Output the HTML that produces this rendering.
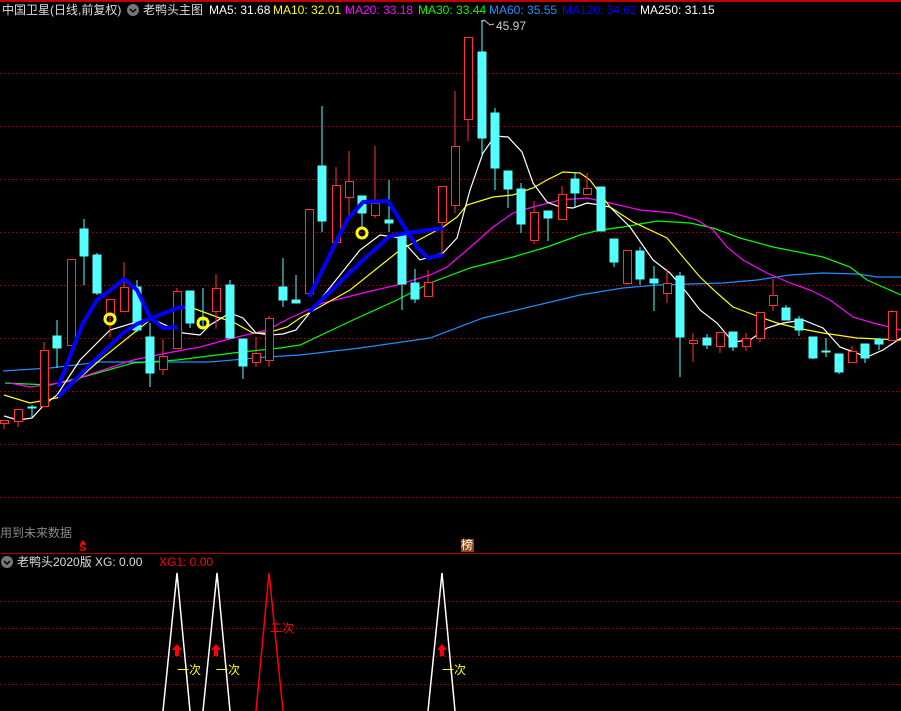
<!DOCTYPE html>
<html><head><meta charset="utf-8"><style>
html,body{margin:0;padding:0;background:#000;width:901px;height:711px;overflow:hidden}
.t{position:absolute;font:12px "Liberation Sans","Noto Sans CJK SC",sans-serif;white-space:nowrap;line-height:14px}
</style></head><body>
<svg width="901" height="711" style="position:absolute;left:0;top:0" xmlns="http://www.w3.org/2000/svg">
<rect x="0" y="0" width="901" height="2" fill="#c00000"/>
<g stroke="#b00000" stroke-dasharray="1 3" stroke-width="1">
<line x1="0" x2="901" y1="73.5" y2="73.5"/><line x1="0" x2="901" y1="126.5" y2="126.5"/><line x1="0" x2="901" y1="179.5" y2="179.5"/><line x1="0" x2="901" y1="232.5" y2="232.5"/><line x1="0" x2="901" y1="285.5" y2="285.5"/><line x1="0" x2="901" y1="338.5" y2="338.5"/><line x1="0" x2="901" y1="391.5" y2="391.5"/><line x1="0" x2="901" y1="444.5" y2="444.5"/><line x1="0" x2="901" y1="497.5" y2="497.5"/>
<line x1="0" x2="901" y1="601.5" y2="601.5"/><line x1="0" x2="901" y1="628.5" y2="628.5"/><line x1="0" x2="901" y1="656.5" y2="656.5"/><line x1="0" x2="901" y1="684.5" y2="684.5"/>
</g>
<rect x="0" y="553" width="901" height="1" fill="#b00000"/>
<!-- MA lines -->
<g fill="none" stroke-width="1.2">
<polyline stroke="#1e90ff" points="3,371 50,368 100,362 167,362 210,362 267,357 300,355 360,348 430,338 483,318 580,295 623,288 657,285 690,284 723,283 757,280 790,275 823,273 857,274 877,277 901,277"/>
<polyline stroke="#00ff00" points="5,383 50,385 83,377 133,363 177,360 233,353 280,348 300,345 353,320 397,300 430,283 470,268 513,257 547,247 580,235 600,230 623,227 657,221 690,223 713,228 740,238 773,247 823,257 850,267 867,280 901,295"/>
<polyline stroke="#ff00ff" points="10,383 30,387 67,382 133,360 167,353 200,347 233,338 267,330 290,318 323,303 363,293 397,285 430,275 447,267 467,250 493,227 513,213 533,207 560,200 587,198 610,203 640,210 673,213 697,220 713,230 727,247 743,260 767,273 790,283 810,290 830,300 853,317 873,323 901,330"/>
<polyline stroke="#ffff00" points="4,395 30,403 57,398 100,360 150,320 180,308 190,307 217,317 233,322 253,333 267,333 287,327 300,318 350,290 400,250 443,227 457,217 467,205 493,197 513,195 533,188 547,180 563,172 580,173 590,180 610,207 633,222 667,238 683,257 700,277 717,293 733,307 757,316 777,323 797,328 823,333 857,338 901,340"/>
<polyline stroke="#ffffff" points="4,416 18,420 32,418 44,405 57,395 80,360 110,330 150,318 183,333 200,335 210,325 230,313 243,318 256,333 270,335 283,334 296,330 320,300 340,275 360,250 380,235 400,238 420,260 443,253 457,238 470,190 483,153 495,136 508,137 522,152 533,183 547,202 560,207 573,208 587,203 600,205 610,207 630,227 653,260 670,273 687,293 700,310 717,323 733,342 750,340 767,328 783,323 803,320 823,328 840,347 867,357 883,350 901,338"/>
</g>
<!-- cyan candles -->
<g stroke="#54ffff" fill="#54ffff">
<line x1="32" x2="32" y1="405" y2="417"/><rect x="28" y="407" width="8" height="1"/>
<line x1="57" x2="57" y1="320" y2="368"/><rect x="53" y="336" width="8" height="12"/>
<line x1="84" x2="84" y1="219" y2="285"/><rect x="80" y="229" width="8" height="27"/>
<line x1="97" x2="97" y1="253" y2="295"/><rect x="93" y="255" width="8" height="38"/>
<line x1="137" x2="137" y1="280" y2="332"/><rect x="133" y="287" width="8" height="43"/>
<line x1="150" x2="150" y1="323" y2="387"/><rect x="146" y="337" width="8" height="36"/>
<line x1="190" x2="190" y1="291" y2="328"/><rect x="186" y="291" width="8" height="32"/>
<line x1="203" x2="203" y1="288" y2="328"/><rect x="199" y="318" width="8" height="2"/>
<line x1="230" x2="230" y1="280" y2="338"/><rect x="226" y="285" width="8" height="53"/>
<line x1="243" x2="243" y1="339" y2="379"/><rect x="239" y="339" width="8" height="27"/>
<line x1="283" x2="283" y1="258" y2="307"/><rect x="279" y="287" width="8" height="13"/>
<line x1="296" x2="296" y1="275" y2="303"/><rect x="292" y="300" width="8" height="3"/>
<line x1="322" x2="322" y1="106" y2="232"/><rect x="318" y="166" width="8" height="55"/>
<line x1="362" x2="362" y1="196" y2="228"/><rect x="358" y="196" width="8" height="17"/>
<line x1="389" x2="389" y1="180" y2="232"/><rect x="385" y="220" width="8" height="3"/>
<line x1="402" x2="402" y1="235" y2="310"/><rect x="398" y="235" width="8" height="49"/>
<line x1="415" x2="415" y1="269" y2="303"/><rect x="411" y="283" width="8" height="16"/>
<line x1="482" x2="482" y1="20" y2="157"/><rect x="478" y="52" width="8" height="86"/>
<line x1="495" x2="495" y1="108" y2="190"/><rect x="491" y="113" width="8" height="55"/>
<line x1="508" x2="508" y1="171" y2="208"/><rect x="504" y="171" width="8" height="18"/>
<line x1="521" x2="521" y1="183" y2="233"/><rect x="517" y="189" width="8" height="35"/>
<line x1="548" x2="548" y1="211" y2="241"/><rect x="544" y="211" width="8" height="7"/>
<line x1="575" x2="575" y1="172" y2="207"/><rect x="571" y="179" width="8" height="14"/>
<line x1="601" x2="601" y1="187" y2="231"/><rect x="597" y="187" width="8" height="44"/>
<line x1="614" x2="614" y1="239" y2="267"/><rect x="610" y="239" width="8" height="23"/>
<line x1="640" x2="640" y1="247" y2="285"/><rect x="636" y="251" width="8" height="28"/>
<line x1="654" x2="654" y1="266" y2="311"/><rect x="650" y="279" width="8" height="4"/>
<line x1="680" x2="680" y1="272" y2="377"/><rect x="676" y="276" width="8" height="61"/>
<line x1="707" x2="707" y1="334" y2="349"/><rect x="703" y="338" width="8" height="7"/>
<line x1="733" x2="733" y1="332" y2="351"/><rect x="729" y="332" width="8" height="15"/>
<line x1="786" x2="786" y1="305" y2="320"/><rect x="782" y="308" width="8" height="12"/>
<line x1="799" x2="799" y1="316" y2="336"/><rect x="795" y="319" width="8" height="11"/>
<line x1="813" x2="813" y1="337" y2="359"/><rect x="809" y="337" width="8" height="21"/>
<line x1="826" x2="826" y1="338" y2="357"/><rect x="822" y="351" width="8" height="1"/>
<line x1="839" x2="839" y1="354" y2="374"/><rect x="835" y="354" width="8" height="18"/>
<line x1="865" x2="865" y1="344" y2="363"/><rect x="861" y="344" width="8" height="14"/>
<line x1="879" x2="879" y1="338" y2="350"/><rect x="875" y="339" width="8" height="5"/>
</g>
<!-- red candles -->
<g stroke="#ff3333" fill="#000">
<line x1="4" x2="4" y1="420" y2="429"/><line x1="18" x2="18" y1="409" y2="427"/><line x1="44" x2="44" y1="342" y2="406"/><line x1="71" x2="71" y1="259" y2="345"/><line x1="110" x2="110" y1="299" y2="337"/><line x1="124" x2="124" y1="262" y2="311"/><line x1="163" x2="163" y1="339" y2="375"/><line x1="177" x2="177" y1="288" y2="348"/><line x1="216" x2="216" y1="274" y2="329"/><line x1="256" x2="256" y1="337" y2="367"/><line x1="269" x2="269" y1="316" y2="367"/><line x1="309" x2="309" y1="209" y2="293"/><line x1="336" x2="336" y1="167" y2="242"/><line x1="349" x2="349" y1="151" y2="215"/><line x1="375" x2="375" y1="146" y2="218"/><line x1="428" x2="428" y1="270" y2="297"/><line x1="442" x2="442" y1="186" y2="253"/><line x1="455" x2="455" y1="91" y2="213"/><line x1="468" x2="468" y1="37" y2="141"/><line x1="534" x2="534" y1="201" y2="244"/><line x1="562" x2="562" y1="186" y2="219"/><line x1="587" x2="587" y1="173" y2="194"/><line x1="627" x2="627" y1="250" y2="285"/><line x1="667" x2="667" y1="269" y2="303"/><line x1="693" x2="693" y1="333" y2="362"/><line x1="720" x2="720" y1="332" y2="353"/><line x1="746" x2="746" y1="333" y2="351"/><line x1="760" x2="760" y1="312" y2="342"/><line x1="773" x2="773" y1="279" y2="311"/><line x1="852" x2="852" y1="346" y2="362"/><line x1="892" x2="892" y1="310" y2="340"/>
<rect x="0.5" y="420.5" width="8" height="3"/><rect x="14.5" y="409.5" width="8" height="12"/><rect x="40.5" y="350.5" width="8" height="56"/><rect x="67.5" y="259.5" width="8" height="86"/><rect x="106.5" y="299.5" width="8" height="16"/><rect x="120.5" y="287.5" width="8" height="24"/><rect x="159.5" y="356.5" width="8" height="13"/><rect x="173.5" y="291.5" width="8" height="57"/><rect x="212.5" y="288.5" width="8" height="23"/><rect x="252.5" y="353.5" width="8" height="9"/><rect x="265.5" y="318.5" width="8" height="42"/><rect x="305.5" y="209.5" width="8" height="84"/><rect x="332.5" y="185.5" width="8" height="57"/><rect x="345.5" y="181.5" width="8" height="16"/><rect x="371.5" y="203.5" width="8" height="12"/><rect x="424.5" y="282.5" width="8" height="14"/><rect x="438.5" y="186.5" width="8" height="36"/><rect x="451.5" y="146.5" width="8" height="59"/><rect x="464.5" y="37.5" width="8" height="82"/><rect x="530.5" y="212.5" width="8" height="28"/><rect x="558.5" y="194.5" width="8" height="25"/><rect x="583.5" y="188.5" width="8" height="6"/><rect x="623.5" y="250.5" width="8" height="33"/><rect x="663.5" y="283.5" width="8" height="10"/><rect x="689.5" y="340.5" width="8" height="3"/><rect x="716.5" y="332.5" width="8" height="14"/><rect x="742.5" y="338.5" width="8" height="8"/><rect x="756.5" y="312.5" width="8" height="26"/><rect x="769.5" y="295.5" width="8" height="10"/><rect x="848.5" y="351.5" width="8" height="11"/><rect x="888.5" y="311.5" width="8" height="29"/>
</g>
<!-- thick blue -->
<g fill="none" stroke="#0000ff" stroke-width="4" stroke-linejoin="round">
<polyline points="58,387 83,323 97,300 113,288 124,279 137,290 150,317 163,328 177,327"/>
<polyline points="58,397 90,365 123,333 137,324 177,308 185,307"/>
<polyline points="309,297 347,220 363,202 388,201 417,247 428,258 443,255"/>
<polyline points="309,312 363,260 390,236 407,233 443,228"/>
</g>
<g fill="none" stroke="#ffff00" stroke-width="3">
<circle cx="110" cy="319" r="5"/><circle cx="203" cy="323" r="5"/><circle cx="362" cy="233" r="5"/>
</g>
<polyline points="482,22 484,20 490,25 494,24" fill="none" stroke="#ccc"/>
<!-- lower panel -->
<g fill="none" stroke="#fff" stroke-width="1.5">
<polyline points="163,711 177,573 190,711"/><polyline points="203,711 217,573 230,711"/><polyline points="428,711 442,573 455,711"/>
</g>
<polyline points="256,711 269,573 283,711" fill="none" stroke="#ff0000" stroke-width="1.5"/>
<g fill="#ff0000">
<polygon points="177,644 172,650 175,650 175,656 179,656 179,650 182,650"/>
<polygon points="216,644 211,650 214,650 214,656 218,656 218,650 221,650"/>
<polygon points="442,644 437,650 440,650 440,656 444,656 444,650 447,650"/>
<polygon points="83,540 80,544 86,544"/>
</g>
<rect x="461" y="539" width="13" height="13" fill="#8b4513"/>
<circle cx="133" cy="10" r="6" fill="#777"/><polyline points="130,9 133,12 136,9" fill="none" stroke="#000" stroke-width="1.5"/>
<circle cx="7" cy="562" r="6" fill="#777"/><polyline points="4,561 7,564 10,561" fill="none" stroke="#000" stroke-width="1.5"/>
</svg>
<div class="t" style="left:2px;top:3px;color:#ddd">中国卫星(日线,前复权)</div>
<div class="t" style="left:143px;top:3px;color:#ddd">老鸭头主图</div>
<div class="t" style="left:209px;top:3px;color:#fff">MA5: 31.68</div>
<div class="t" style="left:273px;top:3px;color:#ffff00">MA10: 32.01</div>
<div class="t" style="left:345px;top:3px;color:#ff00ff">MA20: 33.18</div>
<div class="t" style="left:418px;top:3px;color:#00ff00">MA30: 33.44</div>
<div class="t" style="left:489px;top:3px;color:#1e90ff">MA60: 35.55</div>
<div class="t" style="left:562px;top:3px;color:#0000ff">MA120: 34.62</div>
<div class="t" style="left:640px;top:3px;color:#fff">MA250: 31.15</div>
<div class="t" style="left:496px;top:19px;color:#ccc">45.97</div>
<div class="t" style="left:0px;top:526px;color:#888">用到未来数据</div>
<div class="t" style="left:79px;top:541px;color:#ff0000;font-weight:bold;font-size:11px">S</div>
<div class="t" style="left:461px;top:538px;color:#fff">榜</div>
<div class="t" style="left:17px;top:555px;color:#ddd">老鸭头2020版 XG: 0.00</div>
<div class="t" style="left:159px;top:555px;color:#ff0000">XG1: 0.00</div>
<div class="t" style="left:177px;top:663px;color:#ffff00">一次</div>
<div class="t" style="left:216px;top:663px;color:#ffff00">一次</div>
<div class="t" style="left:442px;top:663px;color:#ffff00">一次</div>
<div class="t" style="left:270px;top:621px;color:#ff0000">二次</div>
</body></html>
